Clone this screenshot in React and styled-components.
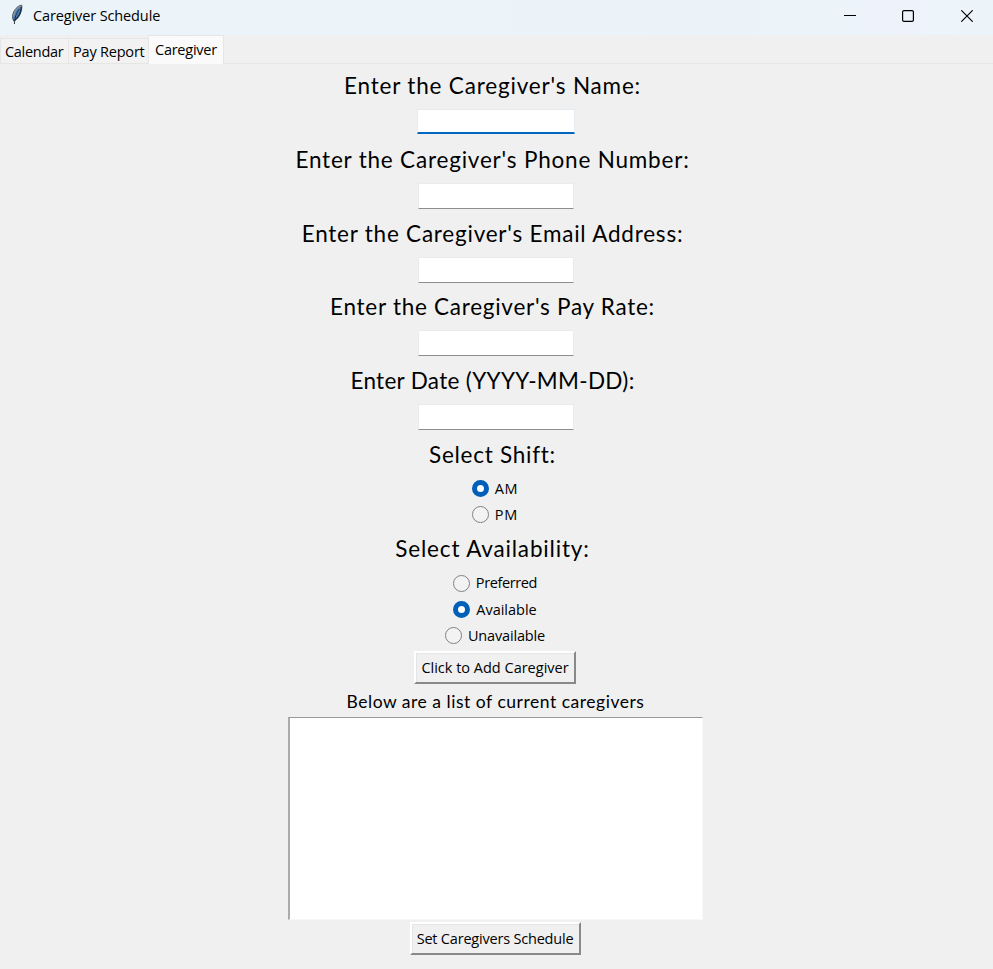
import React, { useState } from 'react';
import styled, { createGlobalStyle, css } from 'styled-components';

const GlobalStyle = createGlobalStyle`
  * { box-sizing: border-box; }
  body { margin: 0; background: #f0f0f0; }
`;

const Window = styled.main`
  display: flex;
  flex-direction: column;
  width: 100%;
  height: 969px;
  overflow: hidden;
  background: #f0f0f0;
  color: #000;
  font-family: "Open Sans", "Noto Sans", sans-serif;
  font-size: 14.5px;
  line-height: 20px;
`;

const TitleBar = styled.header`
  display: flex;
  flex: none;
  align-items: flex-start;
  height: 35px;
  padding-left: 10px;
  background: linear-gradient(90deg, #ebf4f8 0%, #ebf3f8 75%, #eef3fb 91%, #ebf4f8 100%);
`;

const FeatherIcon = styled.svg`
  flex: none;
  width: 15px;
  height: 22px;
  margin-top: 4px;
`;

const Title = styled.h1`
  flex: 1;
  margin: 6px 0 0 8px;
  font-size: 14.5px;
  font-weight: 400;
  line-height: 20px;
  letter-spacing: -0.12px;
`;

const WindowButton = styled.button`
  display: grid;
  place-items: center;
  width: 58.5px;
  height: 32px;
  padding: 0;
  border: 0;
  background: transparent;

  svg { display: block; }
`;

const Controls = styled.div`
  display: flex;
  flex: none;
  width: 172.5px;

  ${WindowButton} { flex: none; }
`;

const TabBar = styled.nav`
  display: flex;
  flex: none;
  align-items: flex-end;
  height: 29px;
  border-bottom: 1px solid #e6e6e6;
`;

const Tab = styled.button`
  width: ${(p) => p.$width}px;
  height: 25px;
  padding: 2px 0 0 4px;
  border: 1px solid #e6e6e6;
  border-bottom: 0;
  border-right-width: 0;
  background: #f2f2f2;
  color: #000;
  font: inherit;
  letter-spacing: ${(p) => p.$spacing}px;
  text-align: left;
  white-space: nowrap;

  ${(p) => p.$active && css`
    height: 29px;
    margin-bottom: -1px;
    padding: 0 0 1px 6px;
    border-right-width: 1px;
    background: #fafafa;
  `}
`;

const Form = styled.section`
  display: flex;
  flex: 1;
  flex-direction: column;
  align-items: center;
  width: 991px;
  padding-top: 1px;
`;

const Field = styled.div`
  display: flex;
  flex-direction: column;
  align-items: center;
  height: 73.8px;
`;

const Heading = styled.label`
  display: block;
  height: 44px;
  padding: 6px 6px 0 0;
  font-family: Lato, sans-serif;
  font-size: 22.5px;
  line-height: 30px;
  letter-spacing: ${(p) => p.$spacing}px;
  white-space: nowrap;
`;

const Entry = styled.input`
  width: ${(p) => (p.$focused ? 158 : 156)}px;
  height: 26px;
  margin-left: 1px;
  padding: 0 4px;
  border: 0 solid #ebebeb;
  border-width: 1px 1px 0;
  border-bottom: 1px solid #8d8d8d;
  border-radius: 1px;
  outline: 0;
  background: #fff;
  font: inherit;

  ${(p) => p.$focused && css`
    height: 25px;
    border-color: #e6ebf0;
    border-bottom: 2px solid #0067c0;
  `}
`;

const Options = styled.div`
  display: flex;
  flex-direction: column;
  align-items: center;
  margin: ${(p) => p.$top}px 1px 0 0;
`;

const Option = styled.label`
  display: flex;
  align-items: center;
  gap: 6px;
  height: 26.3px;
  letter-spacing: ${(p) => p.$spacing}px;
`;

const Radio = styled.input`
  flex: none;
  width: 17px;
  height: 17px;
  margin: 0;
  border: 1px solid #818181;
  border-radius: 50%;
  appearance: none;
  background: #f3f3f3;

  &:checked {
    border: 5px solid #005fb8;
    background: #fff;
  }
`;

const RaisedButton = styled.button`
  flex: none;
  width: ${(p) => p.$width}px;
  height: 33px;
  margin: ${(p) => p.$top}px 1px 0 0;
  padding: 0;
  border: 2px solid;
  border-color: #fff #898989 #898989 #fff;
  background: #f0f0f0;
  color: #000;
  box-shadow: inset 1px 1px #e5e5e5;
  font: inherit;
  letter-spacing: ${(p) => p.$spacing}px;
  white-space: nowrap;
`;

const Caption = styled.p`
  height: 33px;
  margin: 0;
  padding-top: 8px;
  font-family: Lato, sans-serif;
  font-size: 17.5px;
  line-height: 20px;
  letter-spacing: 0.52px;
`;

const ListBox = styled.div`
  flex: none;
  width: 415px;
  height: 203px;
  border: 1px solid #f8f8f8;
  border-top: 1px solid #999;
  border-left: 2px solid #ababab;
  background: #fff;
`;

const fields = [
  { label: "Enter the Caregiver's Name:", spacing: 0.82 },
  { label: "Enter the Caregiver's Phone Number:", spacing: 0.8 },
  { label: "Enter the Caregiver's Email Address:", spacing: 0.77 },
  { label: "Enter the Caregiver's Pay Rate:", spacing: 0.73 },
  { label: 'Enter Date (YYYY-MM-DD):', spacing: 0.31 },
];

const shifts = [
  { name: 'AM', spacing: 0.6 },
  { name: 'PM', spacing: 0.9 },
];

const availabilities = [
  { name: 'Preferred', spacing: -0.38 },
  { name: 'Available', spacing: 0 },
  { name: 'Unavailable', spacing: -0.15 },
];

function RadioGroup({ name, options, value, onChange, top }) {
  return (
    <Options $top={top}>
      {options.map((o) => (
        <Option key={o.name} $spacing={o.spacing}>
          <Radio type="radio" name={name} checked={value === o.name} onChange={() => onChange(o.name)} />
          {o.name}
        </Option>
      ))}
    </Options>
  );
}

function Feather() {
  return (
    <FeatherIcon viewBox="0 0 15 22" aria-hidden="true">
      <path d="M11.7 1.2C8.7 1.3 5.5 4.3 3.6 8.1C2.2 11.2 2.2 14.2 3.8 17.2C7.2 15.4 9.7 12.4 10.8 8.3C11.5 5.8 12.2 3 11.7 1.2Z" fill="#4682c4" stroke="#4b4f54" strokeWidth="1" />
      <path d="M10.6 2C7.4 3.8 4.3 7.6 3.3 12.5" fill="none" stroke="#8d9297" strokeWidth="1.4" />
      <path d="M11.3 3C11.2 7.5 8.8 12.5 5 16" fill="none" stroke="#1c2c40" strokeWidth="1.2" />
      <path d="M9.4 5C6.6 8.4 4.7 13 4.4 20" fill="none" stroke="#1a2430" strokeWidth="0.9" />
    </FeatherIcon>
  );
}

export default function App() {
  const [shift, setShift] = useState('AM');
  const [availability, setAvailability] = useState('Available');

  return (
    <>
      <GlobalStyle />
      <Window>
        <TitleBar>
          <Feather />
          <Title>Caregiver Schedule</Title>
          <Controls>
            <WindowButton aria-label="Minimize">
              <svg width="12" height="12"><path d="M0 5.5H12" stroke="#000" /></svg>
            </WindowButton>
            <WindowButton aria-label="Maximize">
              <svg width="12" height="12"><rect x="0.6" y="0.6" width="10.8" height="10.8" rx="1.4" fill="none" stroke="#000" strokeWidth="1.2" /></svg>
            </WindowButton>
            <WindowButton aria-label="Close">
              <svg width="12" height="12"><path d="M0.3 0.3L11.7 11.7M11.7 0.3L0.3 11.7" stroke="#000" strokeWidth="1.15" /></svg>
            </WindowButton>
          </Controls>
        </TitleBar>
        <TabBar>
          <Tab $width={68} $spacing={-0.3}>Calendar</Tab>
          <Tab $width={80} $spacing={-0.2}>Pay Report</Tab>
          <Tab $width={76} $spacing={-0.25} $active>Caregiver</Tab>
        </TabBar>
        <Form>
          {fields.map((f, i) => (
            <Field key={f.label}>
              <Heading htmlFor={`field-${i}`} $spacing={f.spacing}>{f.label}</Heading>
              <Entry id={`field-${i}`} $focused={i === 0} />
            </Field>
          ))}
          <Heading as="div" $spacing={0.73}>Select Shift:</Heading>
          <RadioGroup name="shift" options={shifts} value={shift} onChange={setShift} top={-2.6} />
          <Heading as="div" $spacing={0.83}>Select Availability:</Heading>
          <RadioGroup name="availability" options={availabilities} value={availability} onChange={setAvailability} top={-1.8} />
          <RaisedButton $width={162} $spacing={0} $top={2.2}>Click to Add Caregiver</RaisedButton>
          <Caption>Below are a list of current caregivers</Caption>
          <ListBox />
          <RaisedButton $width={171} $spacing={-0.2} $top={2}>Set Caregivers Schedule</RaisedButton>
        </Form>
      </Window>
    </>
  );
}
